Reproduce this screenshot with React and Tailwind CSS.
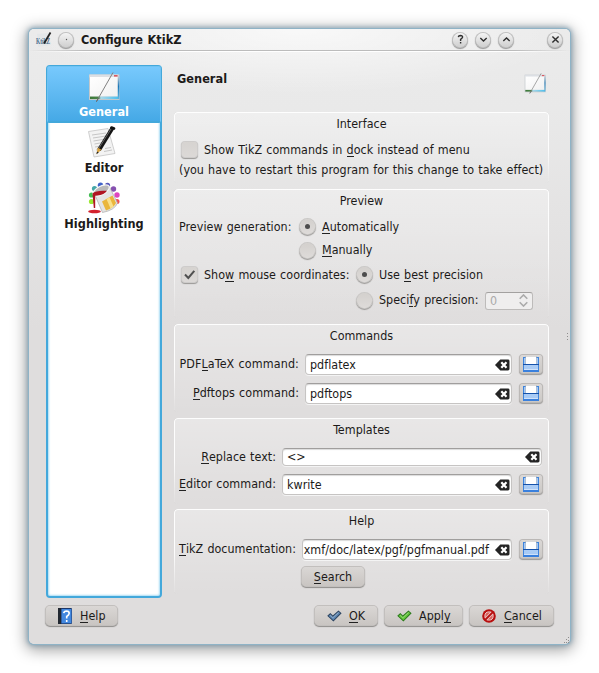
import React from "react";

const U = ({ children }) => (
  <span className="relative inline-block">
    {children}
    <span className="absolute left-0 right-0 bottom-px h-px bg-[#222]" />
  </span>
);

function WindowPen({ className }) {
  return (
    <svg className={className} viewBox="0 0 32 32">
      <defs>
        <linearGradient id="win" x1="0" y1="0" x2="1" y2="1">
          <stop offset="0" stopColor="#fff" />
          <stop offset="1" stopColor="#f1f1f1" />
        </linearGradient>
        <linearGradient id="strip" x1="0" x2="1">
          <stop offset="0" stopColor="#3c7a38" />
          <stop offset=".3" stopColor="#4b8548" />
          <stop offset=".38" stopColor="#a9d8e8" />
          <stop offset="1" stopColor="#4cc0ee" />
        </linearGradient>
        <linearGradient id="side" x1="0" y1="0" x2="0" y2="1">
          <stop offset="0" stopColor="#c9d0d6" />
          <stop offset=".45" stopColor="#1a76b8" />
          <stop offset="1" stopColor="#5fb6de" />
        </linearGradient>
      </defs>
      <rect x="1" y="2.5" width="30.5" height="25.5" fill="#c3c8cb" />
      <rect x="1.5" y="2.5" width="29" height="3" fill="#dcdfe4" />
      <rect x="2" y="5" width="27.8" height="19.6" fill="url(#win)" />
      <rect x="2" y="24.6" width="28.5" height="2.4" fill="url(#strip)" />
      <rect x="29.8" y="4" width="1.4" height="23" fill="url(#side)" />
      <rect x="26" y="3.2" width="3.6" height="1.3" fill="#d93940" />
      <path d="M25 .5 L8.5 29.5" stroke="#808080" strokeWidth="1" />
      <path d="M10.5 26 L8.4 29.7" stroke="#666" strokeWidth="1" />
    </svg>
  );
}

function EditorIcon() {
  return (
    <svg className="size-8" viewBox="0 0 32 32">
      <path d="M0.5 5.5 L20 2.5 L27 27.5 L6 31 Z" fill="#f3f3f3" stroke="#c4c4c4" strokeWidth=".8" />
      <path d="M4 9 L18 7 M5 12 L18 10 M5.5 15 L16 13.3 M6.5 18 L15 16.5 M7 21 L13 20 M8 24 L11 23.5 M17 22.5 L23 21.5 M16 25.5 L24 24" stroke="#c6c6c6" strokeWidth="1" />
      <path d="M24.5 2 L11 24" stroke="#151515" strokeWidth="4" />
      <path d="M23 3 L11 22" stroke="#666" strokeWidth="1" />
      <path d="M23.5 1.5 L26 2.5" stroke="#111" strokeWidth="2.6" strokeLinecap="round" />
      <path d="M9.7 21.5 L13.4 23.8 L8.6 28 Z" fill="#d9a23c" />
      <path d="M9 25.6 L10.8 26.4 L8.4 28.2 Z" fill="#222" />
    </svg>
  );
}

function HighlightIcon() {
  return (
    <svg className="size-8" viewBox="0 0 32 32">
      <circle cx="6.5" cy="6.5" r="2.6" fill="#45a7a8" />
      <circle cx="12.5" cy="3.3" r="2.7" fill="#3f62c8" />
      <circle cx="19.5" cy="3.3" r="2.6" fill="#5556b8" />
      <circle cx="25.5" cy="7" r="2.7" fill="#8650b0" />
      <circle cx="29" cy="13" r="2.7" fill="#df46bf" />
      <circle cx="29" cy="19.5" r="2.5" fill="#f0504f" />
      <circle cx="3.5" cy="13" r="2.6" fill="#43bd54" />
      <circle cx="3.5" cy="19.5" r="2.6" fill="#9be832" />
      <path d="M6.5 12 L21 4 L29.5 21 Q27 28 14.5 30.5 Z" fill="#e4e4e4" stroke="#aaa" strokeWidth=".7" />
      <path d="M14 19.5 L24.5 13.5 L28 21 Q26 26 18 28.5 Z" fill="#eab63b" />
      <path d="M18.5 17 L21.5 15.3 L25.5 24.5 L22.5 26.5 Z" fill="#f9e08a" />
      <ellipse cx="13.2" cy="8.5" rx="9" ry="4.2" transform="rotate(-28 13.2 8.5)" fill="#b9b9b9" stroke="#f5f5f5" strokeWidth="1.3" />
      <path d="M4.5 11.5 Q8 8 19 8.8 Q16.5 12.8 9 13.6 L7.2 13.8 V26 H5.8 Z" fill="#b01522" />
      <ellipse cx="6.5" cy="29.5" rx="6.3" ry="1.7" fill="#d3222c" />
    </svg>
  );
}

function TitleButton({ children }) {
  return (
    <span className="flex size-[14px] items-center justify-center rounded-full bg-linear-to-b from-[#f4f4f4] to-[#cfcfcf] shadow-[0_0_0_1px_#c2c2c2,0_1px_1px_1px_#959595]">
      <svg className="size-[15px] shrink-0" viewBox="0 0 15 15" fill="none" stroke="#2e2e2e" strokeWidth="1.4">
        {children}
      </svg>
    </span>
  );
}

const Radio = ({ on }) => (
  <span className="flex size-[15px] shrink-0 items-center justify-center rounded-full bg-linear-to-b from-[#d3d0cd] to-[#dedbd9] shadow-[0_0_0_1px_#cbc9c7,0_1px_1px_1px_#9a9896]">
    {on && <span className="size-[5px] rounded-full bg-[#4d4d4d]" />}
  </span>
);

const Check = ({ on }) => (
  <span className="flex size-[15px] shrink-0 items-center justify-center rounded-[3px] bg-linear-to-b from-[#d6d3d0] to-[#dcd9d7] shadow-[0_0_0_1px_#cecccb,0_1px_1px_1px_#9a9896]">
    {on && (
      <svg className="size-[15px]" viewBox="0 0 15 15" fill="none" stroke="#505050" strokeWidth="2">
        <path d="M3 7.5 L6.3 11 L12.3 3.8" />
      </svg>
    )}
  </span>
);

const Group = ({ title, className, children }) => (
  <section className={"relative flex flex-col rounded-[4px] bg-linear-to-b from-white/30 to-white/0 " + className}>
    <div className="pointer-events-none absolute inset-0 rounded-[4px] border border-b-0 border-white/90 shadow-[0_0_1px_1px_#00000030] mask-b-from-50% mask-b-to-100%" />
    <h2 className="h-6 text-center leading-6">{title}</h2>
    {children}
  </section>
);

const ClearIcon = () => (
  <svg className="h-[12px] w-[15px] shrink-0" viewBox="0 0 15 12">
    <path d="M0 6 L5.3 .6 H13 Q14.5 .6 14.5 2 V10 Q14.5 11.4 13 11.4 H5.3 Z" fill="#242424" />
    <path d="M6.3 3.2 L11.5 8.8 M11.5 3.2 L6.3 8.8" stroke="#fff" strokeWidth="2.2" />
  </svg>
);

const Field = ({ children, className, end }) => (
  <div className={"flex items-center rounded-[4px] border border-[#c6c4c3] border-t-[#a09e9d] bg-white pr-px shadow-[inset_0_1px_1px_#00000025,0_1px_0_#f4f4f4] " + className}>
    <span className={"flex min-w-0 flex-1 " + (end ? "justify-end pr-[6px] tracking-[0.06px]" : "pl-1")}>{children}</span>
    <ClearIcon />
  </div>
);

const Browse = () => (
  <button className="mb-[2px] ml-2 flex h-[18px] w-[22px] shrink-0 items-center justify-center rounded-[3px] bg-linear-to-b from-[#dbd8d6] to-[#cbc8c5] shadow-[0_0_0_1px_#bbb8b6,0_1px_1px_1px_#9a9896]">
    <svg className="h-4 w-4" viewBox="0 0 16 16">
      <rect x=".5" y="1.5" width="15" height="14" fill="#a3c8f6" stroke="#3f84dc" />
      <rect x="2.5" y="0" width="11" height="8" fill="#b5b5b5" />
      <rect x="3" y=".5" width="10" height="7.5" fill="#fff" />
      <path d="M0 8.5 H16" stroke="#1552ab" />
      <rect x="1" y="9" width="14" height="4" fill="#a9cbf5" />
      <rect x="1" y="13" width="14" height="1" fill="#cfe2fa" />
      <path d="M0 15 H16" stroke="#3a80dd" strokeWidth="2" />
    </svg>
  </button>
);

const Button = ({ icon, children, className }) => (
  <button className={"flex h-[19px] items-center rounded-[4px] bg-linear-to-b from-[#dad7d5] to-[#c9c5c2] shadow-[0_0_0_1px_#c2bfbd,0_1px_1px_1px_#8f8d8b] " + className}>
    {icon}
    <span>{children}</span>
  </button>
);

const Tick = ({ fill, stroke }) => (
  <svg className="ml-3 mr-[7px] h-3 w-[15px]" viewBox="0 0 16 12">
    <path d="M1 5.8 L3.5 3.6 L6.2 6.2 L12.2 .8 L14.8 3 L6.8 11.2 Z" fill={fill} stroke={stroke} strokeWidth="1.1" />
    <path d="M3.5 5 L6.3 7.7 L12.2 2.3" fill="none" stroke="#fff" strokeOpacity=".35" />
  </svg>
);

export default function App() {
  return (
    <div className="h-[673px] w-[599px] overflow-hidden bg-white pl-[29px] pt-[29px] text-[12.4px] leading-4 tracking-[0.03px] [word-spacing:0.6px] whitespace-nowrap text-[#1c1a19] [font-family:'DejaVu_Sans_Condensed','DejaVu_Sans',sans-serif] [font-stretch:condensed]">
      <div className="relative flex h-[615px] w-[541px] flex-col rounded-[5px] bg-[radial-gradient(ellipse_270px_65px_at_50%_0,#ffffffb0,#ffffff00),linear-gradient(#ebebeb_0,#e9e9e9_80px,#dfdddd_300px,#dfdddd)] shadow-[0_0_0_1px_#8fb3c6,0_0_4px_2px_#6c93aba0,0_3px_15px_3px_#00000060]">
        <header className="flex h-[21px] shrink-0 items-center pl-[7px]">
          <svg className="size-4 overflow-visible" viewBox="0 0 16 16">
            <path d="M1 2 L13 1 L15 13 L2 15 Z" fill="#e4e7e9" />
            <text x="0" y="11.5" fontSize="7.5" textLength="14" lengthAdjust="spacingAndGlyphs" fontWeight="bold" fill="#4b6c8b" fontFamily="Liberation Serif" className="tracking-normal">KtikZ</text>
            <path d="M14.5 .5 L8 11.5" stroke="#222" strokeWidth="1.8" />
          </svg>
          <span className="ml-[7px]">
            <TitleButton><circle cx="7.5" cy="7.5" r=".7" fill="#555" stroke="none" /></TitleButton>
          </span>
          <h1 className="ml-2 flex-1 text-[12.6px] font-bold tracking-normal">Configure KtikZ</h1>
          <div className="mr-2 flex gap-[9px]">
            <TitleButton><path d="M5.3 5.2 Q5.5 3.5 7.5 3.5 Q9.7 3.6 9.6 5.2 Q9.4 6.3 7.6 7.4 V9 M7.6 10 V11.5" /></TitleButton>
            <TitleButton><path d="M4.3 6 L7.5 9 L10.7 6" /></TitleButton>
            <TitleButton><path d="M4.3 9 L7.5 6 L10.7 9" /></TitleButton>
            <span className="ml-[26px]"><TitleButton><path d="M4.4 4.4 L10.6 10.6 M10.6 4.4 L4.4 10.6" /></TitleButton></span>
          </div>
        </header>
        <div className="h-[2px] shrink-0 border-t border-b border-t-[#bcbcbc] border-b-white mask-x-from-90% mask-x-to-100%" />

        <div className="flex pl-[17px] pt-[13px]">
          <nav className="flex h-[533px] w-[116px] shrink-0 flex-col rounded-[4px] border-2 border-[#43a8db] bg-white text-center text-[12.6px] font-bold shadow-[inset_0_0_2px_1px_#a9dcf4]">
            <div className="-mx-px -mt-px flex h-[57px] flex-col items-center rounded-[2px] border border-b-2 border-[#6fc3f3] border-b-[#43a8db] bg-linear-to-b from-[#77c9fd] to-[#45a9e6] pt-[5px] text-white">
              <WindowPen className="size-8" />
              <span>General</span>
            </div>
            <div className="flex h-14 flex-col items-center pt-[3px]">
              <EditorIcon />
              <span className="mt-[2px]">Editor</span>
            </div>
            <div className="flex h-14 flex-col items-center pt-[3px]">
              <HighlightIcon />
              <span className="mt-[2px]">Highlighting</span>
            </div>
          </nav>

          <main className="ml-3 flex w-[375px] flex-col">
            <div className="flex h-[47px] items-start justify-between pl-[3px] pr-[3px] pt-[6px]">
              <b className="text-[12.6px]">General</b>
              <WindowPen className="mt-[2px] size-[22px]" />
            </div>

            <Group title="Interface" className="h-[71px]">
              <div className="flex h-[27px] items-center pl-2">
                <Check />
                <span className="ml-[7px]">Show TikZ commands in <U>d</U>ock instead of menu</span>
              </div>
              <div className="-mt-px pl-[5px]">(you have to restart this program for this change to take effect)</div>
            </Group>

            <Group title="Preview" className="mt-[6px] h-[129px]">
              <div className="flex h-[27px] items-center pl-[5px]">
                <span className="w-[121px]">Preview generation:</span>
                <Radio on />
                <span className="ml-[7px]"><U>A</U>utomatically</span>
              </div>
              <div className="-mt-px flex h-[22px] items-center pl-[126px]">
                <Radio />
                <span className="ml-[7px]"><U>M</U>anually</span>
              </div>
              <div className="flex h-[27px] items-center pl-2">
                <Check on />
                <span className="ml-[7px] w-[153px]">Sho<U>w</U> mouse coordinates:</span>
                <Radio on />
                <span className="ml-[7px]">Use <U>b</U>est precision</span>
              </div>
              <div className="flex h-6 items-center pl-[183px]">
                <Radio />
                <span className="ml-[7px] w-[106px]">Speci<U>f</U>y precision:</span>
                <span className="mt-px flex h-[18px] w-12 items-center justify-between rounded-[3px] border border-[#bdbbba] border-t-[#a3a1a0] bg-[#efeeee] pl-1 pr-1 text-[#aaa]">
                  0
                  <svg className="h-[13px] w-[9px]" viewBox="0 0 9 13" fill="none" stroke="#aaa" strokeWidth="1.6">
                    <path d="M.7 4.8 L4.5 1 L8.3 4.8 M.7 8.2 L4.5 12 L8.3 8.2" />
                  </svg>
                </span>
              </div>
            </Group>

            <Group title="Commands" className="mt-[6px] h-[88px]">
              <div className="mt-[6px] flex h-[21px] items-center">
                <span className="mb-px flex w-[125px] justify-end whitespace-pre tracking-[0.12px]">PDF<U>L</U>aTeX command:</span>
                <Field className="ml-[6px] h-[21px] w-[207px]">pdflatex</Field>
                <Browse />
              </div>
              <div className="mt-2 flex h-[21px] items-center">
                <span className="mb-px flex w-[125px] justify-end whitespace-pre tracking-[0.06px]"><U>P</U>dftops command:</span>
                <Field className="ml-[6px] h-[21px] w-[207px]">pdftops</Field>
                <Browse />
              </div>
            </Group>

            <Group title="Templates" className="mt-[6px] h-[86px]">
              <div className="mt-[6px] flex h-[18px] items-center">
                <span className="w-[102px] text-right"><U>R</U>eplace text:</span>
                <Field className="ml-[6px] h-[18px] w-[260px]">&lt;&gt;</Field>
              </div>
              <div className="mt-2 flex h-[21px] items-center">
                <span className="mb-px w-[102px] text-right"><U>E</U>ditor command:</span>
                <Field className="ml-[6px] h-[21px] w-[230px]">kwrite</Field>
                <Browse />
              </div>
            </Group>

            <Group title="Help" className="mt-[5px] h-[85px]">
              <div className="mt-[6px] flex h-[21px] items-center">
                <span className="mb-px w-[122px] text-right"><U>T</U>ikZ documentation:</span>
                <Field end className="ml-[6px] h-[21px] w-[210px]">xmf/doc/latex/pgf/pgfmanual.pdf</Field>
                <Browse />
              </div>
              <div className="mt-2 flex pl-[128px]">
                <Button className="-mt-px w-[62px] justify-center"><U>S</U>earch</Button>
              </div>
            </Group>
          </main>
        </div>

        <footer className="mt-2 flex pl-[17px]">
          <Button
            className="w-[71px]"
            icon={
              <svg className="ml-3 mr-2 h-4 w-[14px]" viewBox="0 0 14 16">
                <rect width="14" height="16" rx="1" fill="#1d3768" />
                <rect x="3.5" y="1" width="10" height="14.3" fill="#4388df" />
                <rect width="3" height="16" fill="#222831" />
                <path d="M5.7 5.2 Q6 3 8.5 3 Q11.2 3.1 11.2 5.3 Q11 7 8.7 8.5 V10.5 M8.7 12 V14" fill="none" stroke="#fff" strokeWidth="1.6" />
              </svg>
            }
          ><U>H</U>elp</Button>
          <Button className="ml-[198px] w-[62px]" icon={<Tick fill="#5f88b4" stroke="#2d4561" />}><U>O</U>K</Button>
          <Button className="ml-2 w-[77px]" icon={<Tick fill="#65c83c" stroke="#2b7a1c" />}>Appl<U>y</U></Button>
          <Button
            className="ml-2 w-[83px]"
            icon={
              <svg className="ml-3 mr-2 size-[14px]" viewBox="0 0 14 14">
                <circle cx="7" cy="7" r="6.8" fill="#b80f0f" />
                <circle cx="7" cy="7" r="4.1" fill="#d8605b" stroke="#f0cfcf" strokeWidth="1" />
                <path d="M3.8 10.2 L10.2 3.8" stroke="#f0cfcf" strokeWidth="3.4" />
                <path d="M3 11 L11 3" stroke="#b80f0f" strokeWidth="1.8" />
              </svg>
            }
          ><U>C</U>ancel</Button>
        </footer>

        <svg className="absolute right-0 bottom-0 size-2" viewBox="0 0 8 8" fill="#8f8d8d">
          <path d="M6 1h1v1H6zM4 3h1v1H4zM6 4h1v1H6zM2 6h1v1H2zM4 6h1v1H4zM6 6h1v1H6z" />
        </svg>
        <svg className="absolute right-px top-[303px] h-[9px] w-[2px]" viewBox="0 0 2 9" fill="#8f8d8d">
          <path d="M0 1h1v1H0zM0 4h1v1H0zM0 7h1v1H0z" />
        </svg>
      </div>
    </div>
  );
}
